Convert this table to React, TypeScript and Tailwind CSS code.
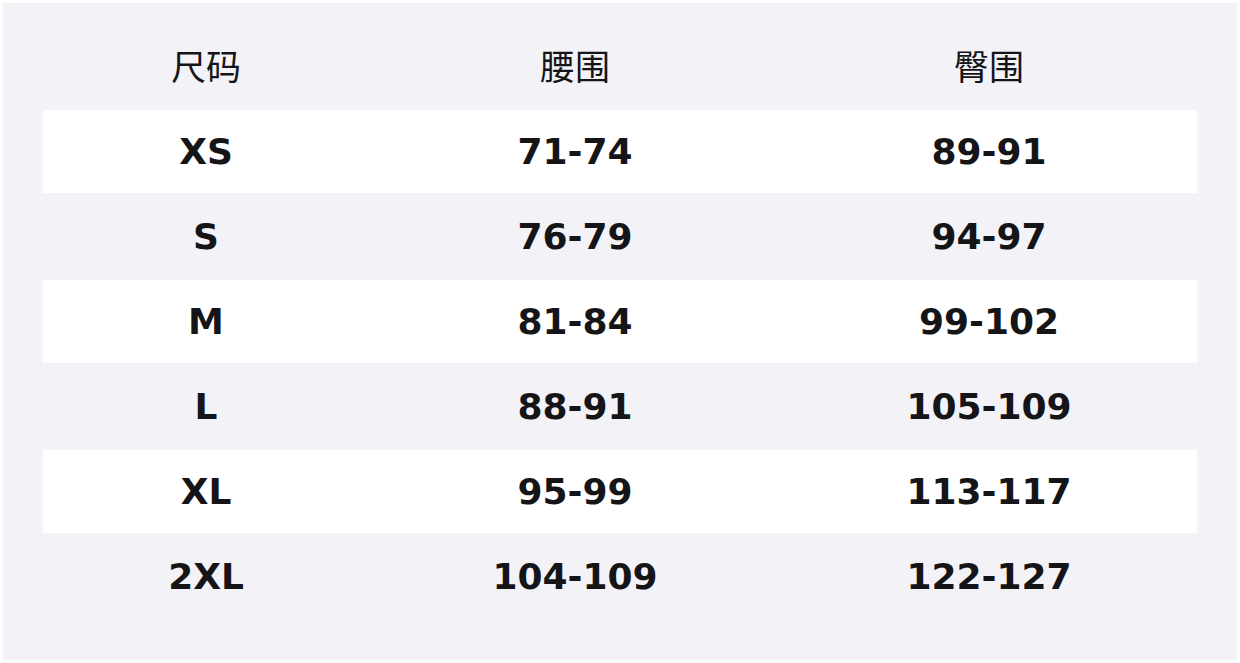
const rows = [
  { size: "XS", waist: "71-74", hip: "89-91" },
  { size: "S", waist: "76-79", hip: "94-97" },
  { size: "M", waist: "81-84", hip: "99-102" },
  { size: "L", waist: "88-91", hip: "105-109" },
  { size: "XL", waist: "95-99", hip: "113-117" },
  { size: "2XL", waist: "104-109", hip: "122-127" },
];

const cols = "grid grid-cols-[326px_412px_1fr]";

export default function App() {
  return (
    <div className="h-[663px] w-[1240px] bg-white p-[3px]">
      <div className="flex h-[657px] w-[1234px] flex-col bg-[#f2f2f7] px-[40px] pt-[40px] text-[#151517]">
        <div className={`${cols} h-[67px] items-start font-['Noto_Sans_CJK_SC',sans-serif] text-[35px] leading-[44px]`}>
          <div className="text-center">尺码</div>
          <div className="text-center">腰围</div>
          <div className="text-center">臀围</div>
        </div>
        <div className="flex flex-col gap-[2px] font-['DejaVu_Sans',sans-serif] text-[36px] font-bold">
          {rows.map((r, i) => (
            <div
              key={r.size}
              className={`${cols} h-[83px] items-center ${i % 2 === 0 ? "bg-white" : ""}`}
            >
              <div className="text-center">{r.size}</div>
              <div className="text-center">{r.waist}</div>
              <div className="text-center">{r.hip}</div>
            </div>
          ))}
        </div>
      </div>
    </div>
  );
}
